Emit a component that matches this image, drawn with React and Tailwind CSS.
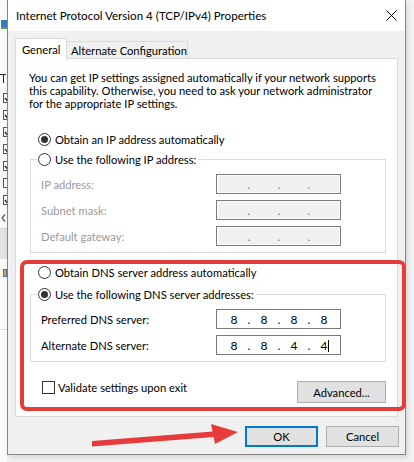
import React from "react"

function Radio({ checked }) {
  return (
    <span className="w-[13px] h-[13px] shrink-0 rounded-full border border-[#333333] bg-white flex items-center justify-center">
      {checked && <span className="w-[7px] h-[7px] rounded-full bg-[#333333]" />}
    </span>
  )
}

function IpBox({ values, disabled, cursor }) {
  return (
    <div
      className={`w-[125px] h-[20px] border border-[#7a7a7a] flex items-center pl-[4px] text-[12px] ${
        disabled ? "bg-[#f0f0f0] shadow-[inset_0_0_0_1px_#ffffff] text-[#777777]" : "bg-white text-black"
      }`}
    >
      {values.map((v, i) => (
        <React.Fragment key={i}>
          {i > 0 && <span className="w-[4px] text-center">.</span>}
          <span className="w-[26px] text-center relative">
            {v}
            {cursor && i === values.length - 1 && (
              <span className="absolute left-[17px] top-[1px] w-px h-[12px] bg-black" />
            )}
          </span>
        </React.Fragment>
      ))}
    </div>
  )
}

function Row({ label, disabled, children, first }) {
  return (
    <div className={`flex items-center h-[20px] pl-[10px] ${first ? "mt-[8px]" : "mt-[6px]"}`}>
      <span className={`w-[175px] ${disabled ? "text-[#9a9a9a]" : "text-black"}`}>{label}</span>
      {children}
    </div>
  )
}

function Tick() {
  return (
    <svg width="8" height="8" viewBox="0 0 8 8">
      <path d="M1 4 L3 6.5 L7.5 1" stroke="#222" strokeWidth="1.4" fill="none" />
    </svg>
  )
}

function BackgroundWindow() {
  return (
    <div className="w-[7px] h-full bg-[#fbfbfb] flex flex-col overflow-hidden">
      <div className="ml-[1px] mt-[20px] w-[6px] h-[9px] bg-[#3d7cc0] border-b-2 border-[#5aa04a]" />
      <div className="mt-[45px] h-[10px] flex">
        <div className="w-[6px] h-[9px] flex flex-col items-center">
          <div className="w-[6px] h-px bg-[#222]" />
          <div className="w-px h-[8px] bg-[#222]" />
        </div>
      </div>
      {[true, true, true, true, true, false, true].map((c, i) => (
        <span
          key={i}
          className={`ml-[3px] ${i === 0 ? "mt-[9px]" : "mt-[7px]"} w-[10px] h-[10px] shrink-0 border border-[#555] bg-white flex items-center justify-center`}
        >
          {c && <Tick />}
        </span>
      ))}
      <svg className="mt-[9px] ml-[1px] shrink-0" width="5" height="8" viewBox="0 0 5 8">
        <path d="M4 0.5 L1 4 L4 7.5" stroke="#555" strokeWidth="1.2" fill="none" />
      </svg>
      <div className="mt-[6px] h-[31px] shrink-0 bg-[#e3e3e3] border-t border-[#d0d0d0]" />
      <div className="mt-[10px] ml-[3px] w-[4px] h-[8px] shrink-0 bg-[#e8a33d] border border-[#3d6fb0]" />
      <div className="mt-[52px] h-px shrink-0 bg-[#dddddd]" />
    </div>
  )
}

export default function App() {
  return (
    <div className="relative w-[414px] h-[462px] overflow-hidden bg-[#f3f3f3] flex font-['Segoe_UI',Lato,sans-serif] text-[11.2px] leading-[13px] text-black">
      <BackgroundWindow />

      <div className="w-[399px] h-[455px] border-x border-b border-[#858585] bg-[#f0f0f0] flex flex-col shadow-[2px_3px_6px_rgba(0,0,0,0.12)]">
        <div className="h-[31px] bg-white flex items-center justify-between pl-[8px] pr-[8px]">
          <span className="-mt-px text-[11.6px]">Internet Protocol Version 4 (TCP/IPv4) Properties</span>
          <svg width="11" height="11" viewBox="0 0 11 11" className="text-black">
            <path d="M0.5 0.5 L10.5 10.5 M10.5 0.5 L0.5 10.5" stroke="currentColor" strokeWidth="1" />
          </svg>
        </div>

        <div className="flex flex-col pl-[7px] pt-[7px]">
          <div className="flex items-end h-[20px]">
            <div className="relative z-10 -mb-px w-[52px] h-[21px] border-x border-t border-[#d9d9d9] bg-white pl-[6px] flex items-center whitespace-nowrap">
              General
            </div>
            <div className="w-[121px] h-[17px] border-r border-t border-[#d9d9d9] bg-[#f0f0f0] pl-[4px] flex items-center whitespace-nowrap">
              Alternate Configuration
            </div>
          </div>

          <div className="w-[383px] h-[359px] border border-[#d9d9d9] bg-white flex flex-col">
            <p className="ml-[13px] mt-[12px] whitespace-nowrap">
              You can get IP settings assigned automatically if your network supports
              <br />
              this capability. Otherwise, you need to ask your network administrator
              <br />
              for the appropriate IP settings.
            </p>

            <div className="ml-[22px] mt-[23px] h-[13px] flex items-center gap-[4px]">
              <Radio checked />
              <span>Obtain an IP address automatically</span>
            </div>

            <fieldset className="ml-[14px] mt-[7px] w-[356px] border border-[#dcdcdc] pb-[6px]">
              <legend className="ml-[6px] pl-[1px] pr-[2px] h-[13px] flex items-center gap-[4px]">
                <Radio />
                <span>Use the following IP address:</span>
              </legend>
              <Row label="IP address:" disabled first>
                <IpBox values={["", "", "", ""]} disabled />
              </Row>
              <Row label="Subnet mask:" disabled>
                <IpBox values={["", "", "", ""]} disabled />
              </Row>
              <Row label="Default gateway:" disabled>
                <IpBox values={["", "", "", ""]} disabled />
              </Row>
            </fieldset>

            <div className="ml-[22px] mt-[13px] h-[13px] flex items-center gap-[4px]">
              <Radio />
              <span>Obtain DNS server address automatically</span>
            </div>

            <fieldset className="ml-[14px] mt-[9px] w-[356px] border border-[#dcdcdc] pb-[6px]">
              <legend className="ml-[6px] pl-[1px] pr-[2px] h-[13px] flex items-center gap-[4px]">
                <Radio checked />
                <span>Use the following DNS server addresses:</span>
              </legend>
              <Row label="Preferred DNS server:" first>
                <IpBox values={["8", "8", "8", "8"]} />
              </Row>
              <Row label="Alternate DNS server:">
                <IpBox values={["8", "8", "4", "4"]} cursor />
              </Row>
            </fieldset>

            <div className="mt-[19px] flex items-start">
              <div className="ml-[26px] h-[13px] flex items-center gap-[3px]">
                <span className="w-[13px] h-[13px] border border-[#333333] bg-white" />
                <span>Validate settings upon exit</span>
              </div>
              <button className="ml-auto mr-[11px] w-[89px] h-[22px] border border-[#adadad] bg-[#e1e1e1] flex items-center justify-center">
                Advanced...
              </button>
            </div>
          </div>

          <div className="mt-[9px] pr-[6px] flex justify-end gap-[8px]">
            <button className="w-[73px] h-[21px] border-2 border-[#0078d7] bg-[#e1e1e1] flex items-center justify-center">
              OK
            </button>
            <button className="w-[73px] h-[21px] border border-[#adadad] bg-[#e1e1e1] flex items-center justify-center">
              Cancel
            </button>
          </div>
        </div>
      </div>

      <div className="absolute left-[20px] top-[260px] w-[386px] h-[151px] border-4 border-[#e63b3b] rounded-[7px]" />

      <svg className="absolute left-0 top-0" width="414" height="462" viewBox="0 0 414 462">
        <polygon points="92,441 92,446.5 214,437 213,431.5" fill="#e63b3b" />
        <polygon points="238,432 211,424 215,444" fill="#e63b3b" />
      </svg>
    </div>
  )
}
